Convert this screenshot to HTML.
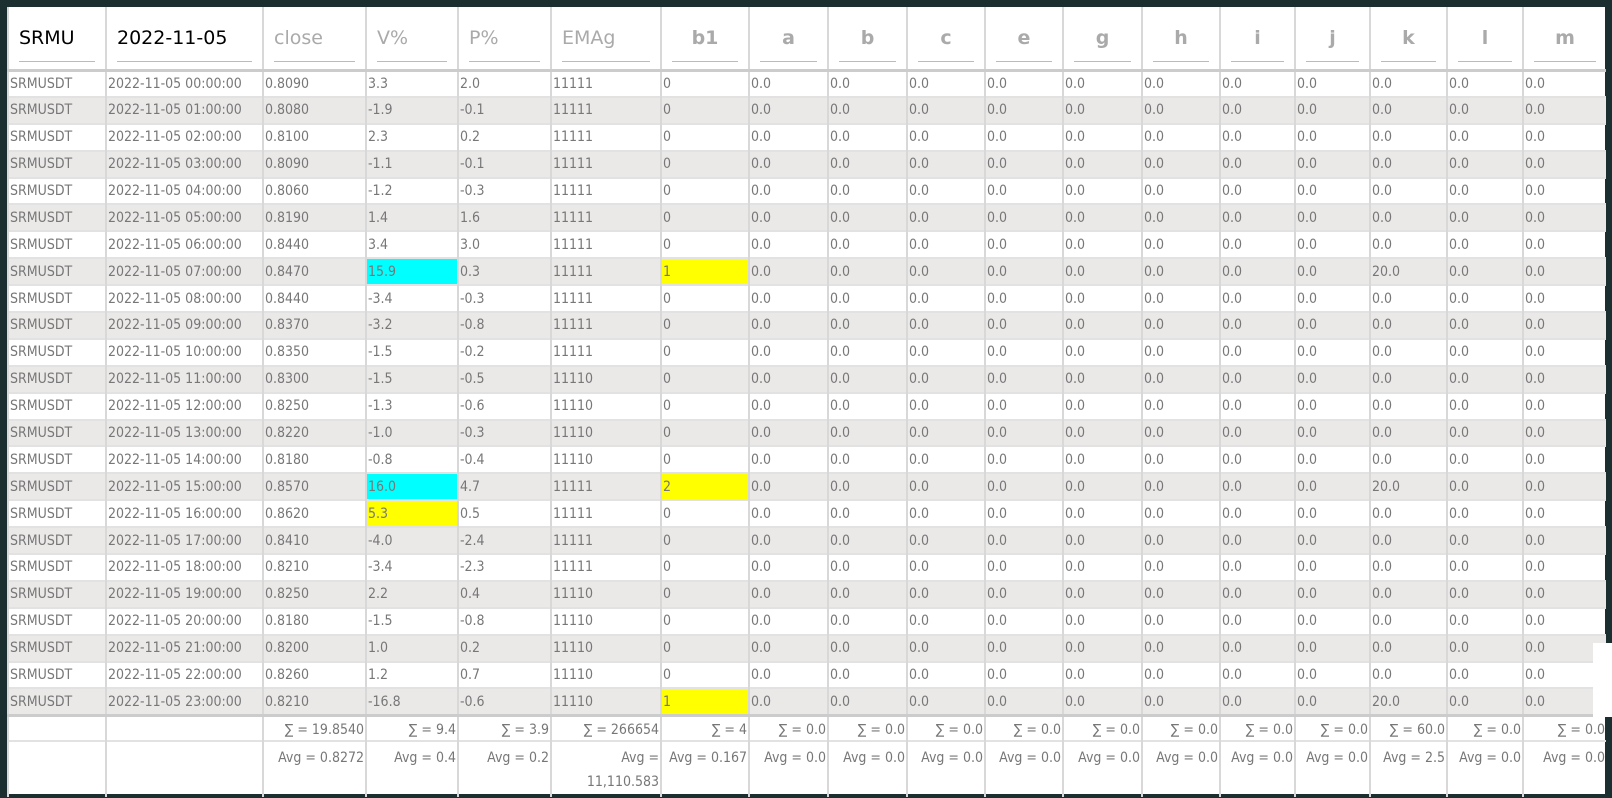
<!DOCTYPE html>
<html><head><meta charset="utf-8"><style>
html,body{margin:0;padding:0;background:#1c2f30;width:1612px;height:798px;overflow:hidden}
#w{position:absolute;left:7px;top:7px;width:1598px;height:787px;background:#fff}
table{width:1598px;border-collapse:collapse;table-layout:fixed;font-family:"Liberation Sans Narrow","DejaVu Sans Condensed","Liberation Sans",sans-serif;color:#777;font-size:14px}
td,th{border-left:2px solid #d8d8d8;padding:0 0 0 1px;white-space:nowrap;overflow:hidden;box-sizing:border-box}
th{height:63px;font-weight:normal;font-family:"DejaVu Sans","Liberation Sans",sans-serif;font-size:19px;color:#aaa;text-align:left;position:relative;border-bottom:3px solid #ccc;padding-left:10px}
th.b{font-weight:bold;text-align:center;padding-left:0}
th.k{color:#000}
th span{position:absolute;left:10px;right:10px;bottom:7px;border-bottom:1px solid #bbb}
tbody td{height:26.9px;border-top:2px solid #e2e2e2}
tbody tr:nth-child(even) td{background:#ebe8e8}
td.c{background:#00ffff!important}td.y{background:#ffff00!important}
tfoot td{text-align:right;vertical-align:top;padding:3px 1px 0 0;border-top:3px solid #ccc}
tfoot tr.a td{border-top:2px solid #e2e2e2;height:56px;line-height:24px;padding-top:4px}
tfoot tr.s td{height:26px;padding-top:5px}
</style></head><body><div id="w">
<table>
<colgroup><col style="width:98px"><col style="width:157px"><col style="width:103px"><col style="width:92px"><col style="width:93px"><col style="width:110px"><col style="width:88px"><col style="width:79px"><col style="width:79px"><col style="width:78px"><col style="width:78px"><col style="width:79px"><col style="width:78px"><col style="width:75px"><col style="width:75px"><col style="width:77px"><col style="width:76px"><col style="width:83px"></colgroup>
<thead><tr><th class="k">SRMU<span></span></th><th class="k">2022-11-05<span></span></th><th>close<span></span></th><th>V%<span></span></th><th>P%<span></span></th><th>EMAg<span></span></th><th class="b">b1<span></span></th><th class="b">a<span></span></th><th class="b">b<span></span></th><th class="b">c<span></span></th><th class="b">e<span></span></th><th class="b">g<span></span></th><th class="b">h<span></span></th><th class="b">i<span></span></th><th class="b">j<span></span></th><th class="b">k<span></span></th><th class="b">l<span></span></th><th class="b">m<span></span></th></tr></thead>
<tbody id="tb"></tbody>
<tfoot>
<tr class="s"><td></td><td></td><td>∑ = 19.8540</td><td>∑ = 9.4</td><td>∑ = 3.9</td><td>∑ = 266654</td><td>∑ = 4</td><td>∑ = 0.0</td><td>∑ = 0.0</td><td>∑ = 0.0</td><td>∑ = 0.0</td><td>∑ = 0.0</td><td>∑ = 0.0</td><td>∑ = 0.0</td><td>∑ = 0.0</td><td>∑ = 60.0</td><td>∑ = 0.0</td><td>∑ = 0.0</td></tr>
<tr class="a"><td></td><td></td><td>Avg = 0.8272</td><td>Avg = 0.4</td><td>Avg = 0.2</td><td>Avg =<br>11,110.583</td><td>Avg = 0.167</td><td>Avg = 0.0</td><td>Avg = 0.0</td><td>Avg = 0.0</td><td>Avg = 0.0</td><td>Avg = 0.0</td><td>Avg = 0.0</td><td>Avg = 0.0</td><td>Avg = 0.0</td><td>Avg = 2.5</td><td>Avg = 0.0</td><td>Avg = 0.0</td></tr>
</tfoot>
</table>
</div>
<div style="position:absolute;left:1593px;top:643px;width:19px;height:74px;background:#fff"></div>
<script>
var d=[["0.8090","3.3","2.0","11111","0",""],["0.8080","-1.9","-0.1","11111","0",""],["0.8100","2.3","0.2","11111","0",""],["0.8090","-1.1","-0.1","11111","0",""],["0.8060","-1.2","-0.3","11111","0",""],["0.8190","1.4","1.6","11111","0",""],["0.8440","3.4","3.0","11111","0",""],["0.8470","15.9","0.3","11111","1","k","c"],["0.8440","-3.4","-0.3","11111","0",""],["0.8370","-3.2","-0.8","11111","0",""],["0.8350","-1.5","-0.2","11111","0",""],["0.8300","-1.5","-0.5","11110","0",""],["0.8250","-1.3","-0.6","11110","0",""],["0.8220","-1.0","-0.3","11110","0",""],["0.8180","-0.8","-0.4","11110","0",""],["0.8570","16.0","4.7","11111","2","k","c"],["0.8620","5.3","0.5","11111","0","","y"],["0.8410","-4.0","-2.4","11111","0",""],["0.8210","-3.4","-2.3","11111","0",""],["0.8250","2.2","0.4","11110","0",""],["0.8180","-1.5","-0.8","11110","0",""],["0.8200","1.0","0.2","11110","0",""],["0.8260","1.2","0.7","11110","0",""],["0.8210","-16.8","-0.6","11110","1","k"]];
var h="";d.forEach(function(r,i){var hh=(i<10?"0":"")+i;h+="<tr><td>SRMUSDT</td><td>2022-11-05 "+hh+":00:00</td><td>"+r[0]+"</td><td"+(r[6]?' class="'+r[6]+'"':"")+">"+r[1]+"</td><td>"+r[2]+"</td><td>"+r[3]+"</td><td"+(r[4]!="0"?' class="y"':"")+">"+r[4]+"</td>";for(var j=0;j<11;j++){h+="<td>"+(j==8&&r[5]?"20.0":"0.0")+"</td>";}h+="</tr>";});
document.getElementById("tb").innerHTML=h;
</script>
</body></html>
